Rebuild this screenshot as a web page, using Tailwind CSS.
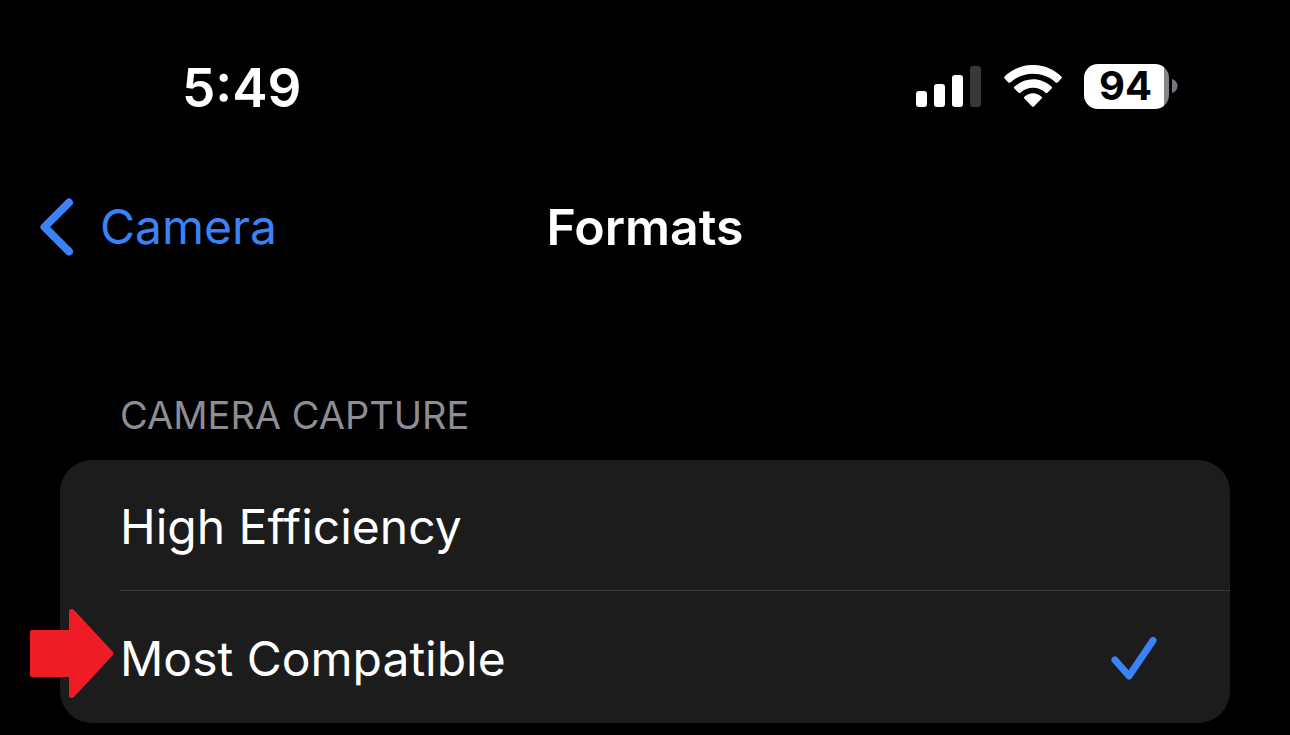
<!DOCTYPE html>
<html lang="en">
<head>
    <meta charset="UTF-8">
    <meta name="viewport" content="width=device-width, initial-scale=1.0">
    <title>Formats</title>
    <script src="https://cdn.jsdelivr.net/npm/@tailwindcss/browser@4"></script>
</head>
<body class="bg-black text-white font-['Inter',sans-serif]">
    <!-- Status bar -->
    <div class="flex items-center justify-between h-[172px] pl-[182px] pr-28">
        <time class="pt-1 text-[53px] leading-[60px] font-semibold">5:49</time>
        <div class="flex items-center">
            <svg class="w-[66px] h-[42px]" viewBox="0 0 66 42" role="img" aria-label="Signal strength">
                <rect x="0" y="26" width="11" height="16" rx="3" fill="#fff"/>
                <rect x="18" y="19" width="11" height="23" rx="3" fill="#fff"/>
                <rect x="36" y="10" width="11" height="32" rx="3" fill="#fff"/>
                <rect x="54" y="1" width="11" height="41" rx="3" fill="#38373c"/>
            </svg>
            <svg class="w-[58px] h-[42px] ml-[22px]" viewBox="0 0 58 42" fill="#fff" role="img" aria-label="Wi-Fi">
                <path d="M0.6 11.6C16 -3.9 42 -3.9 57.4 11.6C58 12.2 58 12.8 57.4 13.4L53.6 17.4C53 18 52.2 18 51.6 17.4C39 5.9 19 5.9 6.4 17.4C5.8 18 5 18 4.4 17.4L0.6 13.4C0 12.8 0 12.2 0.6 11.6Z"/>
                <path d="M10.4 21.8C21 11.7 37 11.7 47.6 21.8C48.2 22.4 48.2 23 47.6 23.6L43.4 27.8C42.8 28.4 42.2 28.4 41.6 27.8C34.4 21.2 23.6 21.2 16.4 27.8C15.8 28.4 15.2 28.4 14.6 27.8L10.4 23.6C9.8 23 9.8 22.4 10.4 21.8Z"/>
                <path d="M20.4 31.8C25.4 27.1 32.6 27.1 37.6 31.8C38.2 32.4 38.2 33 37.6 33.6L29.9 41.4C29.3 42 28.7 42 28.1 41.4L20.4 33.6C19.8 33 19.8 32.4 20.4 31.8Z"/>
            </svg>
            <div class="flex items-center ml-[22px]">
                <div class="flex items-center justify-center w-[85px] h-[45px] rounded-[14px] bg-linear-to-r from-white from-94% to-[#85848a] to-94% pr-0.5 text-black text-[40px] leading-none font-bold">94</div>
                <svg class="w-[6px] h-[14px] ml-[3px]" viewBox="0 0 6 14" fill="#77767c" aria-hidden="true">
                    <path d="M0 0C3.4 1 5.5 3.8 5.5 7S3.4 13 0 14Z"/>
                </svg>
            </div>
        </div>
    </div>

    <!-- Navigation bar -->
    <header class="grid grid-cols-3 items-center h-[110px] px-10 text-[50px] leading-[60px]">
        <a href="#" class="flex items-center gap-[26px] text-[48px] text-[#3a82f7]">
            <svg class="w-[34px] h-[58px]" viewBox="0 0 34 58" fill="none" stroke="currentColor" stroke-width="8" stroke-linecap="round" stroke-linejoin="round" aria-hidden="true">
                <path d="M29 4.5L4.5 29L29 53.5"/>
            </svg>
            Camera
        </a>
        <h1 class="text-center font-semibold">Formats</h1>
    </header>

    <main class="px-[60px] pt-[108px] pb-3">
        <fieldset>
            <legend class="px-[60px] pb-5 text-[38px] leading-[50px] text-[#8d8d93]">CAMERA CAPTURE</legend>
            <div class="rounded-[32px] bg-[#1c1c1c] text-[48px] leading-[60px]">
                <label class="flex items-center justify-between h-[131px] ml-[60px] pt-1 pr-[73px] border-b border-[#3b3b3d]">
                    High Efficiency
                    <input type="radio" name="format" value="efficiency" class="peer sr-only">
                    <svg class="hidden peer-checked:block w-[46px] h-[46px] text-[#3a82f7]" viewBox="0 0 46 46" fill="none" stroke="currentColor" stroke-width="7" stroke-linecap="round" stroke-linejoin="round" aria-hidden="true">
                        <path d="M4 24L18 40L42 4.5"/>
                    </svg>
                </label>
                <label class="relative flex items-center justify-between h-[132px] ml-[60px] pt-1 pr-[73px]">
                    <!-- Pointer to the setting to choose -->
                    <svg class="absolute -left-[90px] top-[18px] w-[84px] h-[90px]" viewBox="0 0 84 90" fill="#ee1c25" aria-hidden="true">
                        <path d="M2 21H39V2Q39 0 41 0Q43 0 44 1L83 43Q84 45 83 46L44 88Q43 89 41 89Q39 89 39 87V68H2Q0 68 0 66V23Q0 21 2 21Z"/>
                    </svg>
                    Most Compatible
                    <input type="radio" name="format" value="compatible" class="peer sr-only" checked>
                    <svg class="hidden peer-checked:block w-[46px] h-[46px] text-[#3a82f7]" viewBox="0 0 46 46" fill="none" stroke="currentColor" stroke-width="7" stroke-linecap="round" stroke-linejoin="round" aria-hidden="true">
                        <path d="M4 24L18 40L42 4.5"/>
                    </svg>
                </label>
            </div>
        </fieldset>
    </main>
</body>
</html>
